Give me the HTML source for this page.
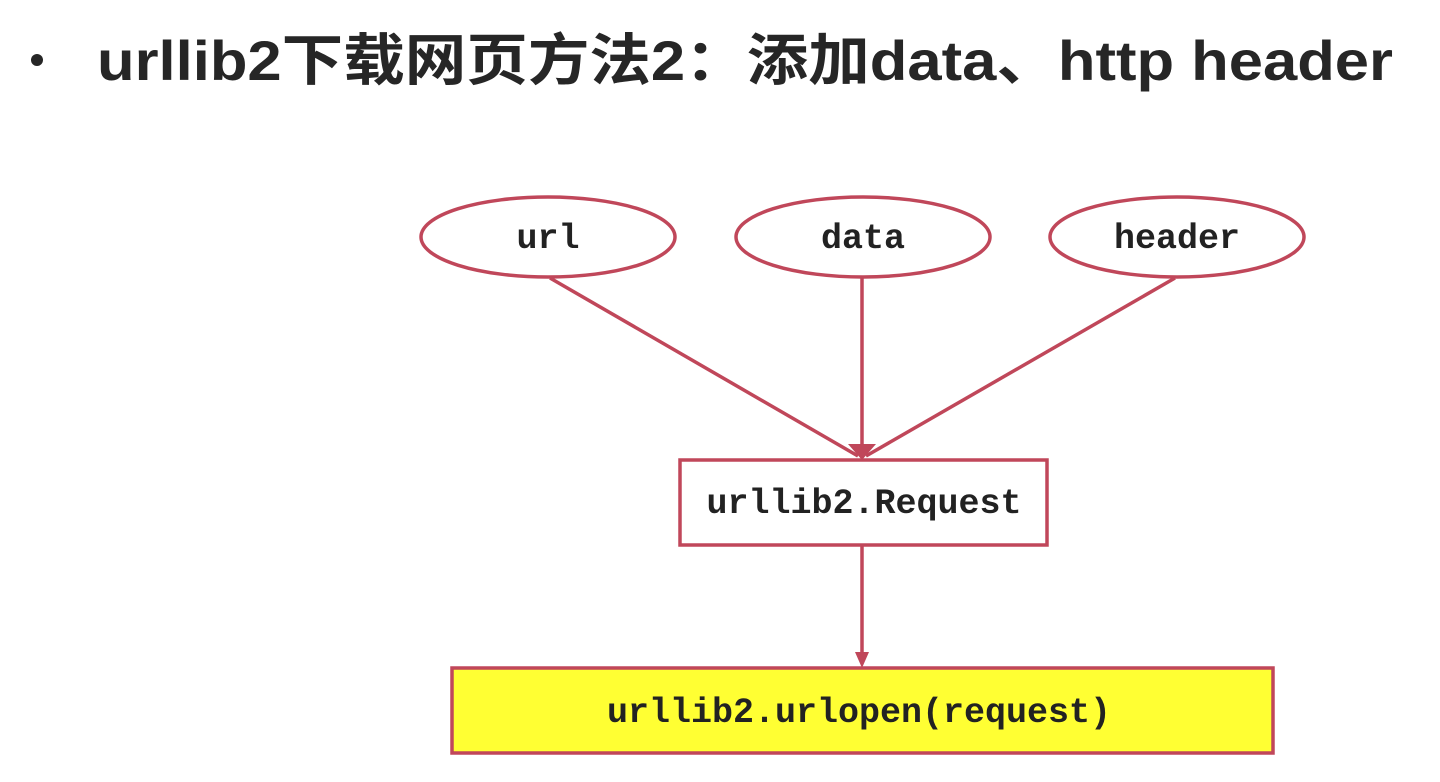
<!DOCTYPE html>
<html><head><meta charset="utf-8"><style>
html,body{margin:0;padding:0;background:#fff;width:1440px;height:782px;overflow:hidden}
</style></head><body>
<svg width="1440" height="782" xmlns="http://www.w3.org/2000/svg">
<circle cx="37" cy="60" r="6" fill="#262626"/>
<text x="97" y="80" font-family="'Liberation Sans','Noto Sans CJK SC',sans-serif" font-weight="bold" font-size="56" fill="#262626" textLength="1296" lengthAdjust="spacingAndGlyphs">urllib2下载网页方法2：添加data、http header</text>
<g stroke="#c0475a" stroke-width="3.5" fill="none">
<ellipse cx="548" cy="237" rx="127" ry="40" fill="#fff"/>
<ellipse cx="863" cy="237" rx="127" ry="40" fill="#fff"/>
<ellipse cx="1177" cy="237" rx="127" ry="40" fill="#fff"/>
<line x1="550" y1="278" x2="858" y2="456"/>
<line x1="862" y1="278" x2="862" y2="456"/>
<line x1="1175" y1="278" x2="866" y2="456"/>
<line x1="862" y1="546" x2="862" y2="662"/>
<rect x="680" y="460" width="367" height="85" fill="#fff"/>
<rect x="452" y="668" width="821" height="85" fill="#ffff33"/>
</g>
<g fill="#c0475a">
<polygon points="862,460 848,444 876,444"/>
<polygon points="862,668 855,652 869,652"/>
</g>
<g font-family="'Liberation Mono',monospace" font-weight="bold" font-size="35" fill="#222" text-anchor="middle">
<text x="548" y="248">url</text>
<text x="863" y="248">data</text>
<text x="1177" y="248">header</text>
<text x="864" y="513">urllib2.Request</text>
<text x="859" y="722">urllib2.urlopen(request)</text>
</g>
</svg>
</body></html>
